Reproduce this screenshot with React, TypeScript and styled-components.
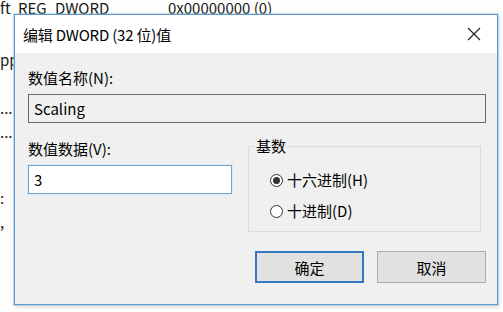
import React from 'react';
import styled, { createGlobalStyle } from 'styled-components';

const GlobalStyle = createGlobalStyle`
  html, body {
    margin: 0;
    padding: 0;
    background: #fdfdfb;
  }
  body {
    font-family: "Noto Sans CJK SC", "Noto Sans", sans-serif;
    color: #000;
  }
`;

const Desktop = styled.div`
  position: relative;
  width: 503px;
  height: 312px;
  overflow: hidden;
  background: #fdfdfb;
`;

// registry editor behind the dialog
const BackRow = styled.div`
  display: flex;
  height: 14px;
  font-size: 15px;
  line-height: 16px;
  white-space: nowrap;
  color: #1a1a1a;
`;

const BackCell = styled.span<{ $w: number }>`
  display: inline-block;
  width: ${p => p.$w}px;
  flex: none;
`;

const BackColumn = styled.div`
  display: flex;
  flex-direction: column;
  width: 14px;
  font-size: 15px;
  color: #1a1a1a;
  white-space: nowrap;
  overflow: hidden;
`;

const BackFrag = styled.div<{ $h: number }>`
  height: ${p => p.$h}px;
  line-height: ${p => p.$h}px;
`;

const Dialog = styled.div`
  position: absolute;
  left: 14px;
  top: 14px;
  width: 482px;
  height: 289px;
  border: 1px solid #5e9bd0;
  box-shadow: 0 0 0 1px rgba(140, 190, 220, 0.45), 1px 2px 4px rgba(0, 0, 0, 0.15);
  background: #f0f0f0;
  display: flex;
  flex-direction: column;
`;

const TitleBar = styled.div`
  height: 38px;
  background: #fff;
  display: flex;
  align-items: center;
  justify-content: space-between;
  padding: 0 11px 0 8px;
  flex: none;
`;

const Title = styled.span`
  font-size: 15px;
  letter-spacing: -0.2px;
`;

const CloseButton = styled.span`
  display: flex;
  align-items: center;
  justify-content: center;
  width: 24px;
  height: 24px;
`;

const Body = styled.div`
  padding: 16px 11px 0 13px;
  display: flex;
  flex-direction: column;
`;

const Label = styled.div`
  font-size: 15px;
  line-height: 18px;
  height: 18px;
  white-space: nowrap;
`;

const Field = styled.div<{ $readonly?: boolean; $width?: number }>`
  box-sizing: border-box;
  height: 29px;
  width: ${p => (p.$width ? `${p.$width}px` : '100%')};
  margin-top: 7px;
  padding-left: 5px;
  display: flex;
  align-items: center;
  font-size: 15px;
  background: ${p => (p.$readonly ? '#f0f0f0' : '#fff')};
  border: 1px solid ${p => (p.$readonly ? '#6a6a6a' : '#7aa2cc')};
  box-shadow: ${p => (p.$readonly ? 'none' : '0 0 0 1px #d9eaf7')};
`;

const DataRow = styled.div`
  display: flex;
  align-items: flex-start;
  margin-top: 17px;
  gap: 16px;
`;

const DataColumn = styled.div`
  display: flex;
  flex-direction: column;
  width: 204px;
  flex: none;
`;

const GroupBox = styled.fieldset`
  box-sizing: border-box;
  margin: -1px 0 0 0;
  width: 233px;
  height: 93px;
  border: 1px solid #dcdcdc;
  padding: 18px 0 0 6px;
`;

const Legend = styled.legend`
  font-size: 15px;
  line-height: 14px;
  padding: 0 1px;
`;

const RadioList = styled.div`
  display: flex;
  flex-direction: column;
  gap: 13px;
  padding-left: 15px;
`;

const RadioRow = styled.div`
  display: flex;
  align-items: center;
  gap: 4px;
  font-size: 15px;
  line-height: 18px;
`;

const RadioDot = styled.span<{ $checked?: boolean }>`
  box-sizing: border-box;
  width: 13px;
  height: 13px;
  border-radius: 50%;
  border: 1px solid #333;
  background: #fff;
  display: flex;
  align-items: center;
  justify-content: center;
  &::after {
    content: '';
    width: 7px;
    height: 7px;
    border-radius: 50%;
    background: ${p => (p.$checked ? '#333' : 'transparent')};
  }
`;

const ButtonBar = styled.div`
  display: flex;
  justify-content: flex-end;
  gap: 13px;
  margin-top: 19px;
`;

const Button = styled.div<{ $primary?: boolean }>`
  box-sizing: border-box;
  width: 109px;
  height: 32px;
  display: flex;
  align-items: center;
  justify-content: center;
  font-size: 15px;
  background: #e1e1e1;
  border: ${p => (p.$primary ? '2px solid #3478bf' : '1px solid #adadad')};
`;

const App: React.FC = () => {
  return (
    <>
      <GlobalStyle />
      <Desktop>
        <BackRow>
          <BackCell $w={18}>ft</BackCell>
          <BackCell $w={150}>REG_DWORD</BackCell>
          <BackCell $w={200}>0x00000000 (0)</BackCell>
        </BackRow>
        <BackColumn>
          <BackFrag $h={34} />
          <BackFrag $h={24}>pp</BackFrag>
          <BackFrag $h={24} />
          <BackFrag $h={24}>...</BackFrag>
          <BackFrag $h={24}>...</BackFrag>
          <BackFrag $h={42} />
          <BackFrag $h={24}>:</BackFrag>
          <BackFrag $h={24}>,</BackFrag>
        </BackColumn>

        <Dialog>
          <TitleBar>
            <Title>编辑 DWORD (32 位)值</Title>
            <CloseButton>
              <svg width="14" height="14" viewBox="0 0 14 14">
                <path d="M1 1 L13 13 M13 1 L1 13" stroke="#222" strokeWidth="1.1" fill="none" />
              </svg>
            </CloseButton>
          </TitleBar>
          <Body>
            <Label>数值名称(N):</Label>
            <Field $readonly>Scaling</Field>
            <DataRow>
              <DataColumn>
                <Label>数值数据(V):</Label>
                <Field>3</Field>
              </DataColumn>
              <GroupBox>
                <Legend>基数</Legend>
                <RadioList>
                  <RadioRow>
                    <RadioDot $checked />
                    十六进制(H)
                  </RadioRow>
                  <RadioRow>
                    <RadioDot />
                    十进制(D)
                  </RadioRow>
                </RadioList>
              </GroupBox>
            </DataRow>
            <ButtonBar>
              <Button $primary>确定</Button>
              <Button>取消</Button>
            </ButtonBar>
          </Body>
        </Dialog>
      </Desktop>
    </>
  );
};

export default App;
